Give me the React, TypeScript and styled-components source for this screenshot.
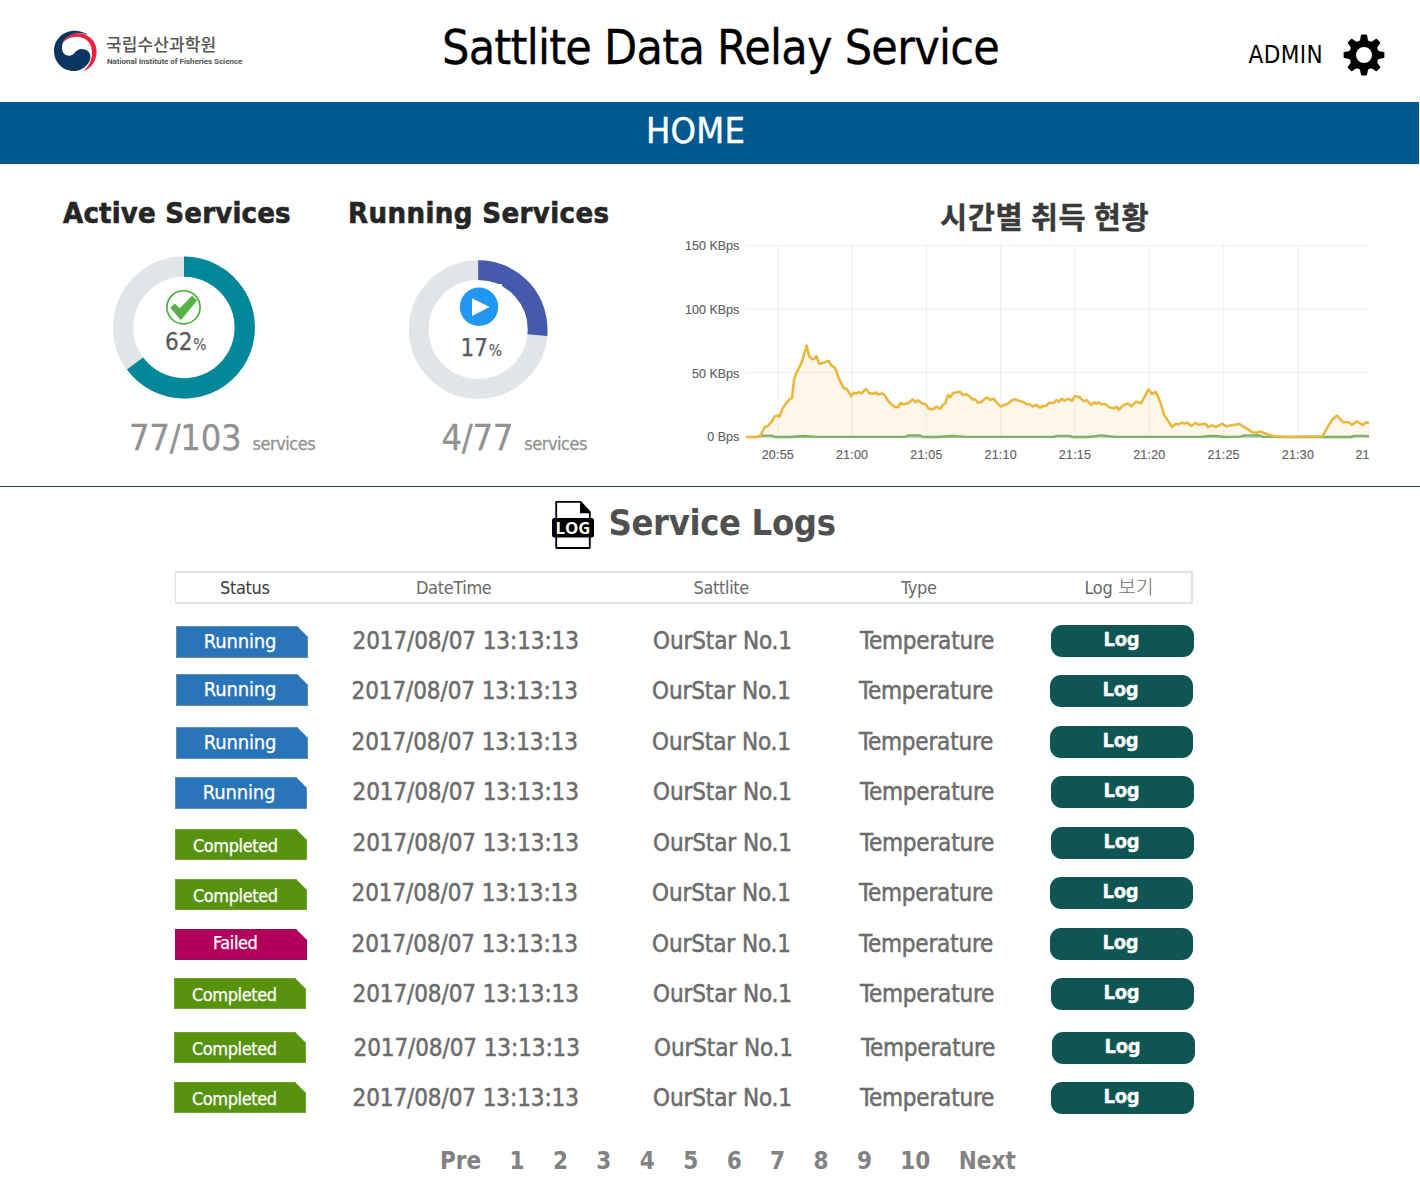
import React from 'react';
import styled, { createGlobalStyle } from 'styled-components';

const GlobalStyle = createGlobalStyle`
  * { box-sizing: border-box; }
  body {
    margin: 0;
    background: #fff;
    font-family: "DejaVu Sans Condensed", "DejaVu Sans", "Noto Sans CJK KR", sans-serif;
  }
`;

const Page = styled.div`
  width: 1420px;
  height: 1200px;
  overflow: hidden;
  background: #fff;
  white-space: nowrap;
`;

/* ---------- header ---------- */

const Header = styled.header`
  display: grid;
  grid-template-columns: 442px 806.5px 1fr;
  height: 102px;
`;

const Brand = styled.div`
  display: flex;
  gap: 8px;
  padding: 30px 0 0 53px;
`;

const BrandText = styled.div`
  display: flex;
  flex-direction: column;
  padding-top: 2px;
  color: #555;
`;

const BrandKo = styled.span`
  font: 500 17px/23px "Noto Sans CJK KR", sans-serif;
  letter-spacing: 0.1px;
`;

const BrandEn = styled.span`
  font: 700 8px/12px Roboto, sans-serif;
  letter-spacing: -0.04px;
  padding: 1px 0 0 1px;
`;

const Title = styled.h1`
  margin: 0;
  padding-top: 17px;
  font-size: 48px;
  line-height: 60px;
  font-weight: 400;
  letter-spacing: -0.76px;
  color: #000;
  -webkit-text-stroke: 0.3px #000;
`;

const Account = styled.div`
  display: flex;
  align-items: flex-start;
  gap: 19.5px;
  padding-top: 33.5px;
`;

const AccountName = styled.span`
  font-size: 24px;
  line-height: 43px;
  letter-spacing: 0.4px;
`;

const NavBar = styled.nav`
  width: 1419px;
  height: 62px;
  padding-left: 646px;
  background: #005990;
  color: #fff;
  font-size: 36px;
  line-height: 57px;
  letter-spacing: 0.2px;
  -webkit-text-stroke: 0.4px #fff;
`;

/* ---------- overview ---------- */

const Overview = styled.section`
  display: grid;
  grid-template-columns: 348px 322px 1fr;
  height: 323px;
  border-bottom: 1px solid #1b5955;
`;

const Stat = styled.div<{ $indent: number }>`
  padding: 31px 0 0 ${p => p.$indent}px;
`;

const StatTitle = styled.h2<{ $track: number }>`
  margin: 0;
  font-size: 29px;
  line-height: 36px;
  letter-spacing: ${p => p.$track}px;
  color: #262626;
  -webkit-text-stroke: 0.6px #262626;
`;

const Gauge = styled.div<{ $left: number }>`
  display: grid;
  width: 146px;
  height: 146px;
  margin: 24px 0 0 ${p => p.$left}px;
  > * { grid-area: 1 / 1; }
`;

const Percent = styled.div<{ $x: number; $y: number }>`
  display: flex;
  align-items: baseline;
  gap: 1px;
  padding: ${p => p.$y}px 0 0 ${p => p.$x}px;
  font-size: 24px;
  line-height: 30px;
  letter-spacing: -0.1px;
  color: #58585c;
  -webkit-text-stroke: 0.25px #58585c;
`;

const PercentSign = styled.span`
  font-size: 15.5px;
  color: #6a6a6d;
`;

const Count = styled.div<{ $left: number }>`
  display: flex;
  align-items: baseline;
  gap: 11px;
  margin: 12px 0 0 ${p => p.$left}px;
  font-size: 36px;
  line-height: 49px;
  letter-spacing: -0.25px;
  color: #929292;
  -webkit-text-stroke: 0.3px #929292;
`;

const Unit = styled.span`
  font-size: 18px;
  letter-spacing: -0.45px;
`;

const Traffic = styled.div`
  padding-top: 29px;
`;

const TrafficTitle = styled.h2`
  margin: 0;
  padding-left: 270px;
  font: 700 29.5px/44px "Noto Sans CJK KR", sans-serif;
  letter-spacing: 0.65px;
  color: #3a3a3a;
  -webkit-text-stroke: 0.4px #3a3a3a;
`;

const ChartSvg = styled.svg`
  display: block;
  margin-top: -7px;
  text {
    font-family: "Liberation Sans", Arial, sans-serif;
    font-size: 12.5px;
    fill: #606060;
    stroke: #606060;
    stroke-width: 0.15px;
  }
`;

/* ---------- logs ---------- */

const LogsHeading = styled.div`
  display: flex;
  gap: 13.5px;
  height: 84px;
  padding: 13px 0 0 551px;
`;

const LogsTitle = styled.h2`
  margin: 0;
  font-size: 36px;
  line-height: 45px;
  letter-spacing: -0.35px;
  color: #505050;
`;

const TableHead = styled.div`
  display: grid;
  grid-template-columns: 196px 277.5px 207.5px 183.5px 1fr;
  width: 1018px;
  height: 33px;
  margin-left: 175px;
  padding-left: 44px;
  border: 2px solid #e2e2e2;
  border-left-width: 1px;
  font-size: 18px;
  line-height: 30px;
  letter-spacing: -0.35px;
  color: #6a6a6a;
`;

const HeadCell = styled.span<{ $dark?: boolean }>`
  color: ${p => (p.$dark ? '#3c3c3c' : 'inherit')};
`;

const HeadKo = styled.span`
  font-family: "Noto Sans CJK KR", sans-serif;
  font-size: 19px;
  line-height: 20px;
  font-weight: 300;
  letter-spacing: 0.3px;
  margin-left: 1px;
`;

const TableBody = styled.div`
  display: flex;
  flex-direction: column;
  padding: 21px 0 0 174px;
`;

const Row = styled.div<{ $pitch: number; $shift: number }>`
  display: grid;
  grid-template-columns: ${p => 177.5 + p.$shift}px 300.5px 207px 190.5px 1fr;
  align-items: start;
  height: ${p => p.$pitch}px;
`;

type Status = 'Running' | 'Completed' | 'Failed';

const badgeFill: Record<Status, string> = {
  Running: '#2a74b9',
  Completed: '#589310',
  Failed: '#b0005c',
};

const badgeEdge: Record<Status, string> = {
  Running: '#5c9498',
  Completed: '#6fa132',
  Failed: '#8f1456',
};

const Badge = styled.div<{ $status: Status; $x: number; $y: number }>`
  width: 132.5px;
  height: ${p => (p.$status === 'Running' ? 32 : 31)}px;
  margin: ${p => p.$y}px 0 0 ${p => p.$x}px;
  padding-right: ${p => (p.$status === 'Running' ? 3.5 : 11)}px;
  border: 1px solid ${p => badgeEdge[p.$status]};
  clip-path: polygon(0 0, calc(100% - 11px) 0, 100% 11px, 100% 100%, 0 100%);
  background: ${p => badgeFill[p.$status]};
  color: #fff;
  text-align: center;
  font-size: ${p => (p.$status === 'Running' ? 20 : 18)}px;
  line-height: ${p => (p.$status === 'Failed' ? 26 : p.$status === 'Running' ? 29 : 31)}px;
  letter-spacing: ${p => (p.$status === 'Running' ? -0.2 : -0.4)}px;
  -webkit-text-stroke: 0.25px #fff;
`;

const Cell = styled.span<{ $track?: number }>`
  font-size: 24px;
  line-height: 32px;
  letter-spacing: ${p => p.$track ?? 0}px;
  color: #6c6c6c;
  -webkit-text-stroke: 0.5px #6c6c6c;
`;

const LogButton = styled.button`
  width: 143px;
  height: 32px;
  padding: 0 1px 3px 0;
  border: 0;
  border-radius: 11px;
  background: #0e5553;
  color: #fff;
  font: 700 20px/29px "DejaVu Sans Condensed", "DejaVu Sans", sans-serif;
  letter-spacing: -0.2px;
  -webkit-text-stroke: 0.3px #fff;
`;

const Pager = styled.nav`
  display: flex;
  gap: 28.4px;
  padding: 11px 0 0 440px;
  font-size: 24px;
  font-weight: 700;
  line-height: 36px;
  color: #828282;
`;

/* ---------- drawings ---------- */

const Logo = () => (
  <svg width="45" height="42" viewBox="69 60 135 126">
    <path fill="#08365f" d="M178 77C165 66 148 62 133 62C98 62 72 90 72 123C72 157 99 183 131 183C150 183 166 172 176 158C186 142 182 124 166 119C150 114 140 120 133 130C126 138 112 140 103 132C94 122 94 104 102 92C113 76 135 68 152 70C163 71 172 74 178 77Z" />
    <path fill="#f0213d" d="M97 100C103 84 120 71 143 70C175 70 200 93 200 125C200 150 184 176 160 183C176 170 186 150 186 128C186 100 170 82 143 80C122 79 106 88 97 100Z" />
  </svg>
);

const Gear = () => (
  <svg width="42" height="42" viewBox="-21 -21 42 42">
    <circle r="11.4" fill="none" stroke="#000" strokeWidth="6.8" />
    {[0, 45, 90, 135, 180, 225, 270, 315].map(a => (
      <path key={a} transform={`rotate(${a})`} d="M-4.2 -13L-3 -14.6L-2.1 -19.4H2.1L3 -14.6L4.2 -13Z" stroke="#000" strokeWidth="2" strokeLinejoin="round" />
    ))}
  </svg>
);

const LogFileIcon = () => (
  <svg width="44" height="50" viewBox="0 0 44 50">
    <path d="M5.2 1.8H29.5L38.8 12V48H5.2Z" fill="#fff" stroke="#000" strokeWidth="1.8" strokeLinejoin="round" />
    <path d="M29 1.8V13.2H39.5Z" />
    <rect x="1" y="18" width="42" height="19.5" rx="2.5" />
    <text x="22" y="33.6" textAnchor="middle" fill="#fff" fontFamily="Open Sans, sans-serif" fontWeight="700" fontSize="16" textLength="35" lengthAdjust="spacingAndGlyphs">LOG</text>
  </svg>
);

function ringArc(cx: number, cy: number, r: number, degrees: number) {
  const t = (degrees * Math.PI) / 180;
  const x = cx + r * Math.sin(t);
  const y = cy - r * Math.cos(t);
  return `M${cx} ${cy - r}A${r} ${r} 0 ${degrees > 180 ? 1 : 0} 1 ${x} ${y}`;
}

const Ring = ({ cx, cy, r, width, degrees, color }: { cx: number; cy: number; r: number; width: number; degrees: number; color: string }) => (
  <>
    <circle cx={cx} cy={cy} r={r} fill="none" stroke="#e1e5e8" strokeWidth={width} />
    <path d={ringArc(cx, cy, r, degrees)} fill="none" stroke={color} strokeWidth={width} />
  </>
);

const ActiveRing = () => (
  <svg width="146" height="146">
    <Ring cx={73} cy={72.5} r={60.8} width={20.3} degrees={233.6} color="#03879a" />
    <circle cx="72.5" cy="52.3" r="16.6" fill="#fff" stroke="#43b034" strokeWidth="1.6" />
    <path fill="#55b247" d="M59.2 52.8L63.6 48.4L68.8 53.2L81 40.7L86.2 45.3L69.9 65.2Z" />
  </svg>
);

const RunningRing = () => (
  <svg width="146" height="146">
    <Ring cx={73.2} cy={74.5} r={59.4} width={19.8} degrees={95.4} color="#4559ad" />
    <rect x="51.5" y="29" width="45.5" height="40" fill="#fff" />
    <circle cx="74" cy="51.8" r="19.2" fill="#2196f3" />
    <path fill="#fff" d="M67 43.3L84.7 52L67 61Z" />
  </svg>
);

/* Samples in plot units: three units per pixel, zero line at 741. */
const inbound = '228,741 262,741 270,738 276,728 284,711 292,709 306,694 314,679 322,676 328,680 338,655 350,637 358,629 366,624 372,570 378,550 386,536 396,515 402,493 410,467 418,500 428,508 434,506 439,498 448,521 458,519 476,513 484,526 494,533 500,545 504,560 514,580 521,594 530,597 544,619 551,608 558,611 567,606 574,610 588,597 598,610 612,611 618,607 624,614 636,610 644,616 654,632 664,643 676,652 684,652 692,638 700,643 716,639 728,628 737,637 744,631 754,639 768,643 776,656 788,658 800,650 811,656 818,645 826,640 834,615 841,622 849,609 870,605 878,615 890,613 902,622 908,629 914,627 924,638 934,636 946,625 953,623 960,630 970,626 980,638 992,650 1002,645 1014,641 1026,631 1036,628 1046,632 1062,637 1070,643 1080,643 1088,650 1100,645 1110,653 1120,647 1128,648 1138,638 1150,639 1160,630 1167,635 1174,626 1183,632 1196,626 1206,633 1214,619 1228,621 1242,634 1250,630 1264,645 1272,637 1279,641 1286,637 1294,643 1308,643 1318,652 1332,655 1340,650 1347,659 1358,647 1374,640 1384,649 1398,635 1413,640 1425,618 1435,598 1446,612 1458,606 1466,625 1474,645 1482,674 1496,695 1506,711 1518,701 1526,703 1536,698 1544,701 1552,698 1564,708 1576,699 1586,704 1606,701 1614,711 1626,706 1638,711 1657,701 1668,709 1686,706 1708,702 1724,712 1736,719 1746,727 1760,728 1770,724 1790,732 1813,739 1860,741 1958,739 1970,716 1986,690 2000,677 2010,686 2020,697 2036,697 2046,704 2061,694 2078,705 2088,697 2097,699';
const outbound = '262,740 272,737 306,737 314,741 360,741 400,738 440,740.5 705,740.5 715,736.5 750,736.5 760,741 800,741 850,738 890,740.5 1150,740.5 1162,737.5 1198,737.5 1208,741 1255,741 1295,736 1335,740.5 1595,740.5 1615,738 1640,738 1660,741 1710,740 1725,736.5 1770,736.5 1780,740.5 1850,741 2040,741 2055,737.5 2085,737.5 2097,739';

const ticks = ['20:55', '21:00', '21:05', '21:10', '21:15', '21:20', '21:25', '21:30'];
const levels: [string, number, number][] = [
  ['150 KBps', 15.5, 20],
  ['100 KBps', 79, 83.6],
  ['50 KBps', 142.5, 147.8],
  ['0 Bps', 206.5, 211],
];

const TrafficChart = () => (
  <ChartSvg width="699" height="240" viewBox="0 0 699 240">
    <g stroke="#000" strokeOpacity="0.05" strokeWidth="1.4">
      {levels.slice(0, 3).map(([, y]) => <path key={y} d={`M76 ${y}H699`} />)}
      {ticks.map((t, i) => <path key={t} d={`M${107.8 + i * 74.3} 15V206`} />)}
    </g>
    <path d="M76 207.6H699" stroke="#999" strokeOpacity="0.5" />
    {levels.map(([label, , y]) => <text key={label} x="69.3" y={y} textAnchor="end">{label}</text>)}
    {ticks.map((t, i) => <text key={t} x={107.8 + i * 74.3} y="229" textAnchor="middle" letterSpacing="0.2">{t}</text>)}
    <text x="685.5" y="229">21</text>
    <g transform="translate(0 -40) scale(0.33333)" strokeLinejoin="round">
      <polygon points={`${inbound} 2097,741`} fill="#eeb04a" fillOpacity="0.11" />
      <polyline points={outbound} fill="none" stroke="#7db163" strokeWidth="7" />
      <polyline points={inbound} fill="none" stroke="#e9b73c" strokeWidth="7.6" />
    </g>
  </ChartSvg>
);

/* ---------- data ---------- */

interface LogEntry { status: Status; pitch: number; shift: number; badgeX: number; badgeY: number }

const entries: LogEntry[] = [
  { status: 'Running', pitch: 50, shift: 1, badgeX: 1.5, badgeY: 1 },
  { status: 'Running', pitch: 51, shift: 0, badgeX: 1.5, badgeY: -1 },
  { status: 'Running', pitch: 50, shift: 0, badgeX: 1.5, badgeY: 1 },
  { status: 'Running', pitch: 51, shift: 1, badgeX: 0.5, badgeY: 1 },
  { status: 'Completed', pitch: 50, shift: 1, badgeX: 0.5, badgeY: 2 },
  { status: 'Completed', pitch: 51, shift: 0, badgeX: 0.5, badgeY: 2 },
  { status: 'Failed', pitch: 50, shift: 0, badgeX: 0.5, badgeY: 1 },
  { status: 'Completed', pitch: 54, shift: 1, badgeX: -0.5, badgeY: 0 },
  { status: 'Completed', pitch: 50, shift: 2, badgeX: -0.5, badgeY: 0 },
  { status: 'Completed', pitch: 50, shift: 1, badgeX: -0.5, badgeY: 0 },
];

const pages = ['Pre', '1', '2', '3', '4', '5', '6', '7', '8', '9', '10', 'Next'];

export default function App() {
  return (
    <Page>
      <GlobalStyle />
      <Header>
        <Brand>
          <Logo />
          <BrandText>
            <BrandKo>국립수산과학원</BrandKo>
            <BrandEn>National Institute of Fisheries Science</BrandEn>
          </BrandText>
        </Brand>
        <Title>Sattlite Data Relay Service</Title>
        <Account>
          <AccountName>ADMIN</AccountName>
          <Gear />
        </Account>
      </Header>
      <NavBar>HOME</NavBar>
      <Overview>
        <Stat $indent={63}>
          <StatTitle $track={0.2}>Active Services</StatTitle>
          <Gauge $left={48}>
            <ActiveRing />
            <Percent $x={54} $y={72}>62<PercentSign>%</PercentSign></Percent>
          </Gauge>
          <Count $left={66}>77/103<Unit>services</Unit></Count>
        </Stat>
        <Stat $indent={0}>
          <StatTitle $track={0.4}>Running Services</StatTitle>
          <Gauge $left={57}>
            <RunningRing />
            <Percent $x={55.5} $y={78}>17<PercentSign>%</PercentSign></Percent>
          </Gauge>
          <Count $left={93.5}>4/77<Unit>services</Unit></Count>
        </Stat>
        <Traffic>
          <TrafficTitle>시간별 취득 현황</TrafficTitle>
          <TrafficChart />
        </Traffic>
      </Overview>
      <LogsHeading>
        <LogFileIcon />
        <LogsTitle>Service Logs</LogsTitle>
      </LogsHeading>
      <TableHead>
        <HeadCell $dark>Status</HeadCell>
        <HeadCell>DateTime</HeadCell>
        <HeadCell>Sattlite</HeadCell>
        <HeadCell>Type</HeadCell>
        <HeadCell>Log <HeadKo>보기</HeadKo></HeadCell>
      </TableHead>
      <TableBody>
        {entries.map((e, i) => (
          <Row key={i} $pitch={e.pitch} $shift={e.shift}>
            <Badge $status={e.status} $x={e.badgeX} $y={e.badgeY}>{e.status}</Badge>
            <Cell $track={-0.1}>2017/08/07 13:13:13</Cell>
            <Cell $track={-0.1}>OurStar No.1</Cell>
            <Cell $track={-0.2}>Temperature</Cell>
            <LogButton>Log</LogButton>
          </Row>
        ))}
      </TableBody>
      <Pager>
        {pages.map(p => <span key={p}>{p}</span>)}
      </Pager>
    </Page>
  );
}
